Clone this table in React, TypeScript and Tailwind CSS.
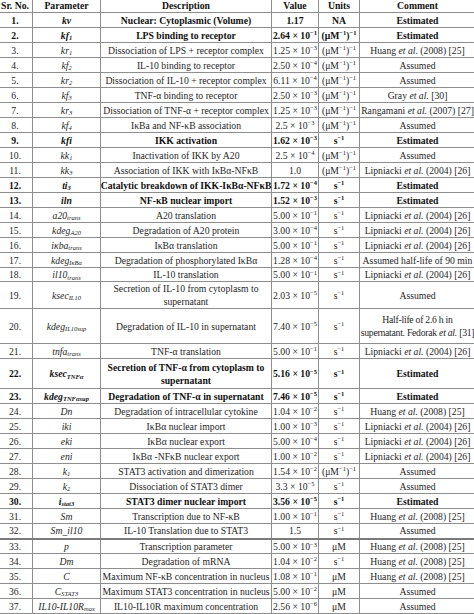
import type { ReactNode } from "react";

type Row = {
  n: number;
  p: ReactNode;
  d: ReactNode;
  v: ReactNode;
  u: ReactNode;
  c: ReactNode;
  b?: boolean;
  h?: string;
  thick?: boolean;
};

const P = (main: string, sub?: string) => (
  <i>
    {main}
    {sub && <sub className="text-[6.5px]">{sub}</sub>}
  </i>
);

const X = (m: string, e: string) => (
  <>
    {m} × 10<sup className="text-[6.5px]">{"−" + e}</sup>
  </>
);

const M = (
  <>
    (μM<sup className="text-[6.5px]">−1</sup>)<sup className="text-[6.5px]">−1</sup>
  </>
);
const S = (
  <>
    s<sup className="text-[6.5px]">−1</sup>
  </>
);
const UM = <>μM</>;

const lip = (
  <>
    Lipniacki <i>et al.</i> (2004) [26]
  </>
);
const huang = (
  <>
    Huang <i>et al.</i> (2008) [25]
  </>
);

const rows: Row[] = [
  { n: 1, p: P("kv"), d: "Nuclear: Cytoplasmic (Volume)", v: "1.17", u: "NA", c: "Estimated", b: true },
  { n: 2, p: P("kf", "1"), d: "LPS binding to receptor", v: X("2.64", "1"), u: M, c: "Estimated", b: true },
  { n: 3, p: P("kr", "1"), d: "Dissociation of LPS + receptor complex", v: X("1.25", "3"), u: M, c: huang },
  { n: 4, p: P("kf", "2"), d: "IL-10 binding to receptor", v: X("2.50", "4"), u: M, c: "Assumed" },
  { n: 5, p: P("kr", "2"), d: "Dissociation of IL-10 + receptor complex", v: X("6.11", "4"), u: M, c: "Assumed" },
  {
    n: 6,
    p: P("kf", "3"),
    d: "TNF-α binding to receptor",
    v: X("2.50", "3"),
    u: M,
    c: (
      <>
        Gray <i>et al.</i> [30]
      </>
    ),
  },
  {
    n: 7,
    p: P("kr", "3"),
    d: "Dissociation of TNF-α + receptor complex",
    v: X("1.25", "3"),
    u: M,
    c: (
      <>
        Rangamani <i>et al.</i> (2007) [27]
      </>
    ),
  },
  { n: 8, p: P("kf", "4"), d: "IκBa and NF-κB association", v: X("2.5", "3"), u: M, c: "Assumed" },
  { n: 9, p: P("kfi"), d: "IKK activation", v: X("1.62", "3"), u: S, c: "Estimated", b: true },
  { n: 10, p: P("kk", "1"), d: "Inactivation of IKK by A20", v: X("2.5", "4"), u: M, c: "Assumed" },
  { n: 11, p: P("kk", "3"), d: "Association of IKK with IκBα-NFκB", v: "1.0", u: M, c: lip },
  { n: 12, p: P("ti", "3"), d: "Catalytic breakdown of IKK-IκBα-NFκB", v: X("1.72", "4"), u: S, c: "Estimated", b: true },
  { n: 13, p: P("iln"), d: "NF-κB nuclear import", v: X("1.52", "3"), u: S, c: "Estimated", b: true },
  { n: 14, p: P("a20", "trans"), d: "A20 translation", v: X("5.00", "1"), u: S, c: lip },
  { n: 15, p: P("kdeg", "A20"), d: "Degradation of A20 protein", v: X("3.00", "4"), u: S, c: lip },
  { n: 16, p: P("iκba", "trans"), d: "IκBα translation", v: X("5.00", "1"), u: S, c: lip },
  { n: 17, p: P("kdeg", "IκBα"), d: "Degradation of phosphorylated IκBα", v: X("1.28", "4"), u: S, c: "Assumed half-life of 90 min" },
  { n: 18, p: P("il10", "trans"), d: "IL-10 translation", v: X("5.00", "1"), u: S, c: lip, h: "h-[14px]" },
  {
    n: 19,
    p: P("ksec", "IL10"),
    d: (
      <>
        Secretion of IL-10 from cytoplasm to
        <br />
        supernatant
      </>
    ),
    v: X("2.03", "5"),
    u: S,
    c: "Assumed",
    h: "h-[27px]",
  },
  {
    n: 20,
    p: P("kdeg", "IL10sup"),
    d: "Degradation of IL-10 in supernatant",
    v: X("7.40", "5"),
    u: S,
    c: (
      <span className="tracking-[-0.25px]">
        Half-life of 2.6 h in
        <br />
        supernatant. Fedorak <i>et al.</i> [31]
      </span>
    ),
    h: "h-[35px]",
  },
  { n: 21, p: P("tnfa", "trans"), d: "TNF-α translation", v: X("5.00", "1"), u: S, c: lip },
  {
    n: 22,
    p: P("ksec", "TNFα"),
    d: (
      <>
        Secretion of TNF-α from cytoplasm to
        <br />
        supernatant
      </>
    ),
    v: X("5.16", "5"),
    u: S,
    c: "Estimated",
    b: true,
    h: "h-[30px]",
  },
  { n: 23, p: P("kdeg", "TNFαsup"), d: "Degradation of TNF-α in supernatant", v: X("7.46", "5"), u: S, c: "Estimated", b: true },
  { n: 24, p: P("Dn"), d: "Degradation of intracellular cytokine", v: X("1.04", "2"), u: S, c: huang },
  { n: 25, p: P("iki"), d: "IκBα nuclear import", v: X("1.00", "3"), u: S, c: lip },
  { n: 26, p: P("eki"), d: "IκBα nuclear export", v: X("5.00", "4"), u: S, c: lip },
  { n: 27, p: P("eni"), d: "IκBα -NFκB nuclear export", v: X("1.00", "2"), u: S, c: lip },
  { n: 28, p: P("k", "1"), d: "STAT3 activation and dimerization", v: X("1.54", "2"), u: M, c: "Assumed" },
  { n: 29, p: P("k", "2"), d: "Dissociation of STAT3 dimer", v: X("3.3", "5"), u: S, c: "Assumed" },
  { n: 30, p: P("i", "stat3"), d: "STAT3 dimer nuclear import", v: X("3.56", "5"), u: S, c: "Estimated", b: true },
  { n: 31, p: P("Sm"), d: "Transcription due to NF-κB", v: X("1.00", "1"), u: S, c: huang },
  { n: 32, p: P("Sm_il10"), d: "IL-10 Translation due to STAT3", v: "1.5", u: S, c: "Assumed", thick: true },
  { n: 33, p: P("p"), d: "Transcription parameter", v: X("5.00", "3"), u: UM, c: huang },
  { n: 34, p: P("Dm"), d: "Degradation of mRNA", v: X("1.04", "2"), u: S, c: huang },
  { n: 35, p: P("C"), d: "Maximum NF-κB concentration in nucleus", v: X("1.08", "1"), u: UM, c: huang },
  { n: 36, p: P("C", "STAT3"), d: "Maximum STAT3 concentration in nucleus", v: X("5.00", "2"), u: UM, c: "Assumed" },
  { n: 37, p: P("IL10-IL10R", "max"), d: "IL10-IL10R maximum concentration", v: X("2.56", "6"), u: UM, c: "Assumed" },
];

const cell = "border border-[#8e8e8e] p-0 align-middle whitespace-nowrap leading-[13px]";

function Cell({ children, head }: { children: ReactNode; head?: boolean }) {
  const inner = (
    <div className="flex justify-center">
      <span className="text-center">{children}</span>
    </div>
  );
  return head ? <th className={cell}>{inner}</th> : <td className={cell}>{inner}</td>;
}

export default function App() {
  return (
    <div className="h-[614px] w-[474px] overflow-hidden bg-white font-['Liberation_Serif',serif] text-[9.7px] text-[#262626]">
      <table className="-ml-[3px] -mt-[3px] w-[478px] table-fixed border-collapse">
        <colgroup>
          <col className="w-[35px]" />
          <col className="w-[68px]" />
          <col className="w-[171px]" />
          <col className="w-[47px]" />
          <col className="w-[41px]" />
          <col className="w-[116px]" />
        </colgroup>
        <thead>
          <tr className="h-[15px] font-bold text-[#111]">
            <Cell head>Sr. No.</Cell>
            <Cell head>Parameter</Cell>
            <Cell head>Description</Cell>
            <Cell head>Value</Cell>
            <Cell head>Units</Cell>
            <Cell head>Comment</Cell>
          </tr>
        </thead>
        <tbody>
          {rows.map((r) => (
            <tr
              key={r.n}
              className={`${r.h ?? "h-[15px]"} ${r.b ? "font-bold text-[#111]" : ""} ${r.thick ? "border-b-2 border-b-[#7a7a7a]" : ""}`}
            >
              <Cell>{r.n}.</Cell>
              <Cell>{r.p}</Cell>
              <Cell>{r.d}</Cell>
              <Cell>{r.v}</Cell>
              <Cell>{r.u}</Cell>
              <Cell>{r.c}</Cell>
            </tr>
          ))}
        </tbody>
      </table>
    </div>
  );
}
